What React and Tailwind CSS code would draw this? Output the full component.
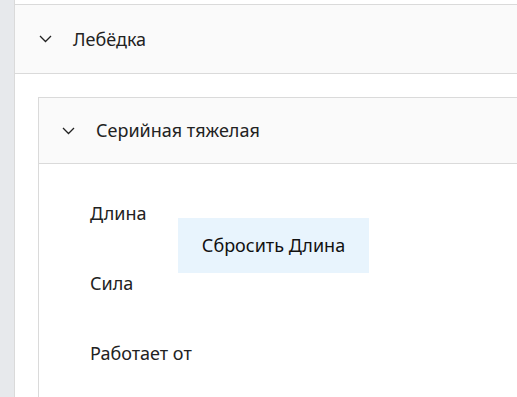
import React from 'react';

function Chevron() {
  return (
    <svg className="w-[13px] h-[8px] shrink-0" viewBox="0 0 13 8" fill="none" stroke="#222" strokeWidth="1.3">
      <path d="M1 1l5.5 5.5L12 1" />
    </svg>
  );
}

export default function App() {
  const fields = ['Длина', 'Сила', 'Работает от'];

  return (
    <div
      className="flex w-[517px] h-[397px] overflow-hidden bg-white text-[#222]"
      style={{ fontFamily: '"Noto Sans", "Open Sans", sans-serif' }}
    >
      {/* Left rail */}
      <div className="w-[15px] shrink-0 bg-[#e7e9ec] border-r border-[#dadada]" />

      <div className="flex-1 flex flex-col pt-[4px]">
        {/* Outer section */}
        <div className="flex-1 flex flex-col border-t border-[#dadada]">
          <div className="h-[69px] shrink-0 flex items-center gap-[21px] pl-[24px] bg-[#fafafa] border-b border-[#dadada]">
            <Chevron />
            <span className="text-[18px]">Лебёдка</span>
          </div>

          <div className="flex-1 flex flex-col pt-[23px] pl-[23px]">
            {/* Nested card */}
            <div className="flex-1 flex flex-col border-l border-t border-[#dadada]">
              <div className="h-[66px] shrink-0 flex items-center gap-[21px] pl-[23px] bg-[#fafafa] border-b border-[#dadada]">
                <Chevron />
                <span className="text-[18px]">Серийная тяжелая</span>
              </div>

              <div className="relative flex-1 pl-[51px] pt-[37px] flex flex-col gap-[46px]">
                {fields.map((f) => (
                  <div key={f} className="text-[18px] leading-[24px]">{f}</div>
                ))}

                <div className="absolute left-[139px] top-[54px] w-[191px] h-[55px] bg-[#e8f4fd] flex items-center justify-center text-[18px] text-[#111]">
                  Сбросить Длина
                </div>
              </div>
            </div>
          </div>
        </div>
      </div>
    </div>
  );
}
